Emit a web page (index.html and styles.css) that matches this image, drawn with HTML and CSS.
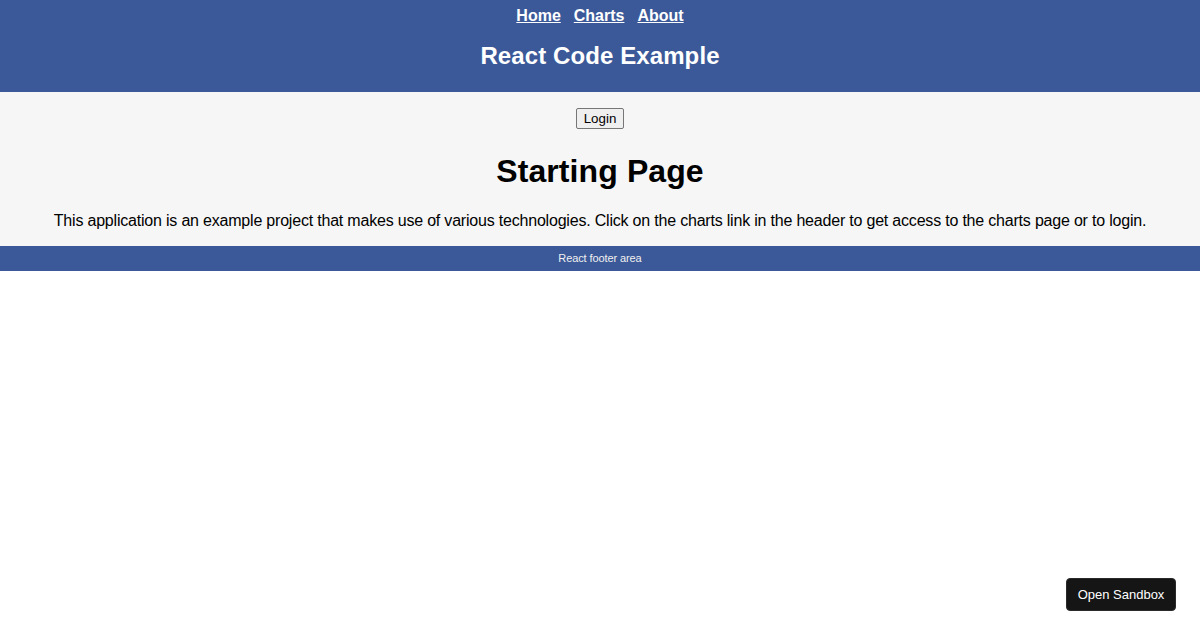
FILE: index.html
```html
<!DOCTYPE html>
<html>
<head>
<meta charset="utf-8">
<title>React Code Example</title>
<link rel="stylesheet" href="styles.css">
</head>
<body>
<header class="header">
  <nav class="nav">
    <a href="#">Home</a>
    <a href="#">Charts</a>
    <a href="#">About</a>
  </nav>
  <h2 class="title">React Code Example</h2>
</header>
<main class="main">
  <div class="login-row"><button class="login">Login</button></div>
  <h1 class="page-title">Starting Page</h1>
  <p class="intro">This application is an example project that makes use of various technologies. Click on the charts link in the header to get access to the charts page or to login.</p>
</main>
<footer class="footer">React footer area</footer>
<a class="sandbox" href="#">Open Sandbox</a>
</body>
</html>
```
FILE: styles.css
```css
html, body {
  margin: 0;
  padding: 0;
  background: #ffffff;
  font-family: "Liberation Sans", Arial, Helvetica, sans-serif;
}

.header {
  background: #3b5998;
  color: #ffffff;
  text-align: center;
  padding: 7px 0 22px;
}

.nav {
  display: flex;
  justify-content: center;
  gap: 13px;
  height: 18px;
  line-height: 18px;
  font-size: 16px;
  font-weight: bold;
}

.nav a {
  color: #ffffff;
  text-decoration: underline;
}

.title {
  margin: 17px 0 0;
  font-size: 24px;
  line-height: 28px;
  font-weight: bold;
  letter-spacing: 0.1px;
}

.main {
  background: #f6f6f6;
  text-align: center;
  padding: 16px 0 16px;
  color: #000000;
}

.login-row {
  height: 21px;
  display: flex;
  justify-content: center;
}

.login {
  font-family: "Liberation Sans", Arial, sans-serif;
  font-size: 13.33px;
  height: 21px;
  width: 48px;
  padding: 1px 6px;
  background: #efefef;
  border: 1px solid #767676;
  border-radius: 2px;
  color: #000;
}

.page-title {
  margin: 24px 0 0;
  font-size: 32px;
  line-height: 37px;
  font-weight: bold;
  letter-spacing: 0.1px;
}

.intro {
  margin: 22px 0 0;
  font-size: 16px;
  line-height: 18px;
  letter-spacing: -0.2px;
}

.footer {
  background: #3b5998;
  color: #f0f0f0;
  text-align: center;
  font-size: 11px;
  height: 25px;
  line-height: 25px;
  letter-spacing: -0.1px;
}

.sandbox {
  position: fixed;
  right: 24px;
  bottom: 19px;
  width: 110px;
  height: 33px;
  box-sizing: border-box;
  display: flex;
  align-items: center;
  justify-content: center;
  background: #151515;
  color: #ffffff;
  border-radius: 4px;
  border: 1px solid #2a2a2a;
  font-family: "Liberation Sans", Arial, sans-serif;
  font-size: 13px;
  text-decoration: none;
}
```
